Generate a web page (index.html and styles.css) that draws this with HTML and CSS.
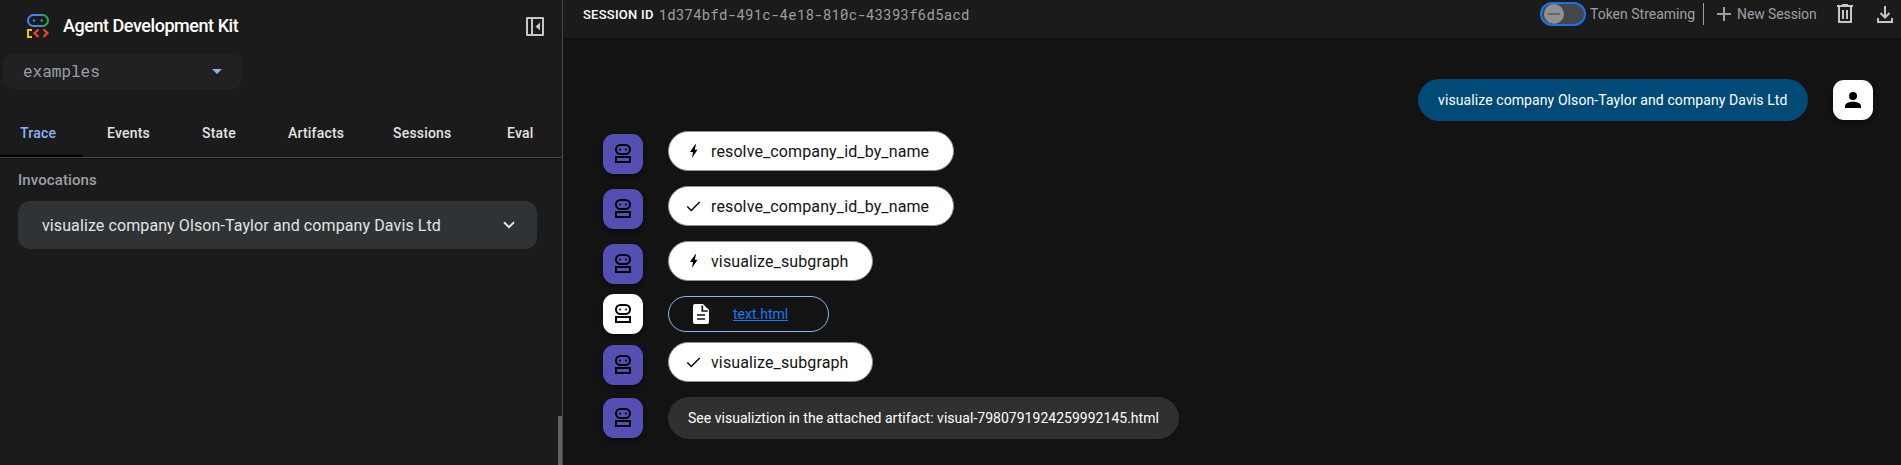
FILE: index.html
```html
<!DOCTYPE html>
<html lang="en">
<head>
<meta charset="utf-8">
<title>Agent Development Kit</title>
<link rel="stylesheet" href="styles.css">
</head>
<body>
<svg class="defs" width="0" height="0">
  <symbol id="robot" viewBox="0 0 24 24"><g fill="none" stroke="#000" stroke-width="2"><rect x="5" y="3" width="14" height="9" rx="4.500"/><rect x="5" y="15" width="14" height="5"/></g><circle cx="9" cy="7.500" r="1"/><circle cx="15" cy="7.500" r="1"/></symbol>
  <symbol id="bolt" viewBox="0 0 16 16"><path d="M9.300 1.300 4 9H7L6 15 11.500 6.800H8.800L10 1.300Z"/></symbol>
  <symbol id="check" viewBox="0 0 16 16"><path d="M1.300 8.400 5.300 12.400 13.700 4" fill="none" stroke="#000" stroke-width="1.400"/></symbol>
</svg>
<div class="app">
  <aside class="sidebar">
    <header class="brand">
      <svg class="logo" viewBox="0 0 22 24" fill="none" stroke-width="2">
        <path d="M14 1H6.500a5.500 5.500 0 0 0 0 11H15" stroke="#4285f4"/>
        <path d="M14 1h1.500a5.500 5.500 0 0 1 0 11H14.500" stroke="#34a853"/>
        <circle cx="7" cy="6.500" r="1.200" fill="#4285f4"/><circle cx="14.700" cy="6.500" r="1.200" fill="#4285f4"/>
        <path d="M5 16H1v7h4" stroke="#fbbc04"/>
        <path d="M11.500 15.500 7.500 19.200l4 3.700M16.500 15.500l4 3.700-4 3.700" stroke="#ea4335" stroke-width="2.200"/>
      </svg>
      <h1 class="title">Agent Development Kit</h1>
      <svg class="collapse" viewBox="0 0 18 19"><path d="M1 1h16v17H1zM6 1v17" fill="none" stroke="#c4c7c5" stroke-width="2" stroke-linejoin="round"/><path d="M14 5.500v8L9.500 9.500z" fill="#c4c7c5"/></svg>
    </header>
    <div class="select"><span>examples</span><i class="caret"></i></div>
    <nav class="tabs">
      <span class="tab tab-active">Trace</span><span class="tab">Events</span><span class="tab">State</span><span class="tab">Artifacts</span><span class="tab">Sessions</span><span class="tab">Eval</span>
    </nav>
    <section class="trace">
      <h2 class="subhead">Invocations</h2>
      <div class="invocation"><span>visualize company Olson-Taylor and company Davis Ltd</span>
        <svg class="chevron" viewBox="0 0 12 8"><path d="M1 1.200l5 5 5-5" fill="none" stroke="#e3e3e3" stroke-width="2"/></svg></div>
    </section>
    <div class="scrollthumb"></div>
  </aside>
  <main class="main">
    <div class="toolbar">
      <span class="sid-label">SESSION ID</span><span class="sid">1d374bfd-491c-4e18-810c-43393f6d5acd</span>
      <div class="actions">
        <div class="streaming"><div class="toggle"><i class="knob"></i></div><span>Token Streaming</span></div>
        <i class="divider"></i>
        <div class="newsession"><svg class="plus" viewBox="0 0 14 14"><path d="M7 0v14M0 7h14" stroke="#9aa0a6" stroke-width="2"/></svg><span>New Session</span></div>
        <svg class="trash" viewBox="0 0 16 19"><path d="M2 3v15h12V3M0 2h16M5 1h6M6 6v9M10 6v9" fill="none" stroke="#c4c7c5" stroke-width="2"/></svg>
        <svg class="download" viewBox="0 0 16 17"><path d="M8 0v11M3.500 7 8 11.500 12.500 7M1 12v4h14v-4" fill="none" stroke="#c4c7c5" stroke-width="2"/></svg>
      </div>
    </div>
    <div class="chat">
      <div class="user-row">
        <div class="message user"><span>visualize company Olson-Taylor and company Davis Ltd</span></div>
        <div class="avatar light"><svg viewBox="0 0 24 24"><circle cx="12" cy="8" r="4"/><path d="M4 20v-2c0-3 5-4.300 8-4.300s8 1.300 8 4.300v2z"/></svg></div>
      </div>
      <div class="row"><div class="avatar low"><svg><use href="#robot"/></svg></div><div class="chip wide"><svg><use href="#bolt"/></svg><span>resolve_company_id_by_name</span></div></div>
      <div class="row"><div class="avatar low"><svg><use href="#robot"/></svg></div><div class="chip wide"><svg><use href="#check"/></svg><span>resolve_company_id_by_name</span></div></div>
      <div class="row third"><div class="avatar low"><svg><use href="#robot"/></svg></div><div class="chip"><svg><use href="#bolt"/></svg><span>visualize_subgraph</span></div></div>
      <div class="row file-row"><div class="avatar light flush"><svg><use href="#robot"/></svg></div><div class="file"><svg viewBox="0 0 16 20"><path d="M2 0h8l6 6v12a2 2 0 0 1-2 2H2a2 2 0 0 1-2-2V2a2 2 0 0 1 2-2z" fill="#fff"/><path d="M9.300 1.500V7h5.400M4 11h8M4 15h8" fill="none" stroke="#131313" stroke-width="1.700"/></svg><a>text.html</a></div></div>
      <div class="row"><div class="avatar low"><svg><use href="#robot"/></svg></div><div class="chip"><svg><use href="#check"/></svg><span>visualize_subgraph</span></div></div>
      <div class="row"><div class="avatar"><svg><use href="#robot"/></svg></div><div class="message bot"><span>See visualiztion in the attached artifact: visual-7980791924259992145.html</span></div></div>
    </div>
  </main>
</div>
</body>
</html>
```
FILE: styles.css
```css
* { box-sizing: border-box; }
body { margin: 0; background: #131313; font-family: Roboto, "Liberation Sans", sans-serif; font-size: 14px; color: #e3e3e3; overflow: hidden; }
h1, h2 { margin: 0; font: inherit; }
svg { display: block; flex: none; }
span, a, h1 { white-space: nowrap; }
.defs { position: absolute; }
.app { display: flex; width: 1901px; height: 465px; }

.sidebar { position: relative; width: 563px; flex: none; background: #1b1b1b; border-right: 1px solid #444746; }
.brand { display: flex; align-items: center; height: 51px; padding: 1px 18px 0 27px; }
.logo { width: 22px; height: 24px; }
.title { flex: 1; margin: 0 0 2px 14px; font-size: 18px; font-weight: 500; letter-spacing: -0.45px; color: #fff; }
.collapse { width: 18px; height: 19px; }
.select { display: flex; align-items: center; justify-content: space-between; width: 239px; height: 35px; margin: 3px 0 0 3px; padding: 0 20px; border-radius: 10px; background: #212123; color: #9aa0a6; font: 16px "Roboto Mono", "DejaVu Sans Mono", monospace; }
.select span { margin-bottom: 3px; }
.caret { border: 5px solid transparent; border-top-color: #8ab4f8; border-bottom: 0; }
.tabs { display: grid; grid-template-columns: 87px 95px 86px 105px 114px 1fr; height: 69px; padding-left: 20px; border-bottom: 1px solid #444746; box-shadow: 0 1px #0e0e0e; font-weight: 500; letter-spacing: 0.2px; }
.tab { padding-top: 36px; }
.tab-active { height: 68px; margin: 0 24px 0 -20px; padding-left: 20px; color: #8ab4f8; border-bottom: 2px solid #000; }
.trace { padding: 13px 25px 0 18px; }
.subhead { height: 18px; color: #9aa0a6; font-size: 15px; line-height: 18px; font-weight: 500; letter-spacing: 0.1px; }
.invocation { display: flex; align-items: center; justify-content: space-between; height: 48px; margin-top: 12px; padding: 0 22px 0 24px; border-radius: 12px; background: #303336; font-size: 16px; letter-spacing: 0.1px; }
.chevron { width: 12px; height: 8px; }
.scrollthumb { position: absolute; right: 0; bottom: 0; width: 4px; height: 49px; background: #5f6368; }

.main { flex: 1; min-width: 0; }
.toolbar { display: flex; align-items: center; height: 38px; padding: 0 8px 10px 20px; background: #1b1b1b; color: #9aa0a6; }
.sid-label { color: #fff; font-size: 13px; font-weight: 500; letter-spacing: 0.24px; }
.sid { margin-left: 5px; font: 14px "Roboto Mono", "DejaVu Sans Mono", monospace; letter-spacing: 0.24px; }
.actions { display: grid; grid-template-columns: 163px 14px 120px 40px 16px; align-items: center; margin-left: auto; }
.streaming { display: flex; align-items: center; gap: 4px; }
.toggle { width: 46px; height: 24px; border: 2px solid #1a73e8; border-radius: 12px; background: #444749; padding: 0 2px; }
.knob { display: flex; align-items: center; justify-content: center; width: 20px; height: 20px; border-radius: 50%; background: #8e9092; }
.knob::before { content: ""; width: 12px; height: 2px; background: #65686a; }
.newsession { display: flex; align-items: center; gap: 6px; letter-spacing: -0.1px; }
.plus { width: 14px; height: 14px; }
.trash { width: 16px; height: 19px; margin-bottom: 1px; }
.download { width: 16px; height: 17px; }
.divider { width: 1px; height: 22px; background: #9aa0a6; }

.chat { padding: 41px 28px 0 40px; }
.user-row { display: flex; justify-content: flex-end; gap: 25px; height: 52px; align-items: flex-start; }
.message { display: flex; align-items: center; height: 42px; padding: 0 20px; border-radius: 21px; color: #fff; }
.user { width: 390px; background: #004a77; letter-spacing: 0.095px; }
.bot { width: 511px; background: #303030; letter-spacing: 0.02px; }
.row { display: flex; gap: 25px; height: 55px; align-items: flex-start; }
.third { height: 53px; }
.file-row { height: 48px; }
.avatar { width: 40px; height: 40px; margin-top: 1px; padding: 8px; border-radius: 11px; background: #5450b3; box-shadow: 0 3px 5px rgba(0,0,0,.4); flex: none; }
.avatar svg { width: 24px; height: 24px; }
.low { margin-top: 3px; }
.flush { margin-top: 0; }
.light { background: #fff; }
.chip { display: flex; align-items: center; width: 205px; height: 40px; padding: 0 18px; border: 1px solid #8e918f; border-radius: 20px; background: #fff; color: #131313; font-size: 16px; letter-spacing: 0.12px; }
.chip svg { width: 16px; height: 16px; margin: 0 9px 0 -1px; }
.wide { width: 286px; }
.file { display: flex; align-items: center; width: 161px; height: 36px; margin-top: 2px; padding-left: 24px; border: 1px solid #8ab4f8; border-radius: 18px; }
.file svg { width: 16px; height: 20px; }
.file a { margin-left: 24px; color: #127bf5; text-decoration: underline; }
```
